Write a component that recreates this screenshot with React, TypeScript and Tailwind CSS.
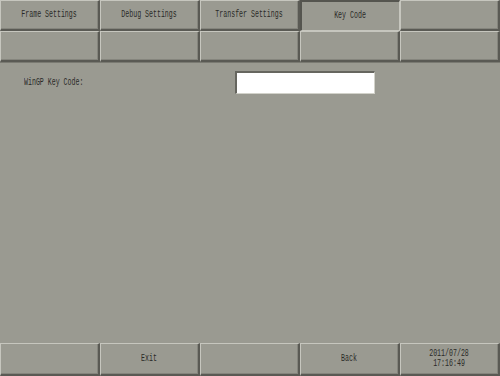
import type { ReactNode } from 'react';

const font = { fontFamily: '"Liberation Mono", "DejaVu Sans Mono", monospace' };

function Label({ children, left = false }: { children: ReactNode; left?: boolean }) {
  return (
    <span
      className={`inline-block text-[10px] leading-[10px] text-[#2a2a28] scale-x-[0.66] whitespace-nowrap ${left ? 'origin-left' : ''}`}
      style={font}
    >
      {children}
    </span>
  );
}

function Btn({ children, pressed = false, h = 'h-[31px]' }: { children?: ReactNode; pressed?: boolean; h?: string }) {
  const edge = pressed
    ? 'border-t-2 border-l-2 border-t-[#55554f] border-l-[#55554f] border-r border-b border-r-[#c6c6be] border-b-[#c6c6be]'
    : 'border-t border-l border-t-[#c6c6be] border-l-[#c6c6be] border-r-2 border-b-2 border-r-[#5a5a54] border-b-[#5a5a54] shadow-[inset_-1px_-1px_0_#85857d]';
  return (
    <div className={`w-[100px] ${h} ${edge} bg-[#9a9a91] flex flex-col items-center justify-center`}>
      {children}
    </div>
  );
}

export default function App() {
  return (
    <div className="w-[500px] h-[376px] bg-[#9a9a91] flex flex-col overflow-hidden">
      <div className="flex">
        <Btn><Label>Frame Settings</Label></Btn>
        <Btn><Label>Debug Settings</Label></Btn>
        <Btn><Label>Transfer Settings</Label></Btn>
        <Btn pressed><Label>Key Code</Label></Btn>
        <Btn />
      </div>
      <div className="flex">
        <Btn />
        <Btn />
        <Btn />
        <Btn />
        <Btn />
      </div>
      <div className="h-px bg-[#7a7a72]" />

      <div className="flex-1 flex items-start pt-[8px]">
        <div className="w-[235px] h-[23px] flex items-center pl-[24px]">
          <Label left>WinGP Key Code:</Label>
        </div>
        <div className="w-[140px] h-[23px] bg-white border-t-2 border-l-2 border-t-[#66665f] border-l-[#66665f] border-r border-b border-r-[#d2d2ca] border-b-[#d2d2ca]" />
      </div>

      <div className="flex">
        <Btn h="h-[33px]" />
        <Btn h="h-[33px]"><Label>Exit</Label></Btn>
        <Btn h="h-[33px]" />
        <Btn h="h-[33px]"><Label>Back</Label></Btn>
        <Btn h="h-[33px]">
          <Label>2011/07/28</Label>
          <Label>17:16:49</Label>
        </Btn>
      </div>
    </div>
  );
}
